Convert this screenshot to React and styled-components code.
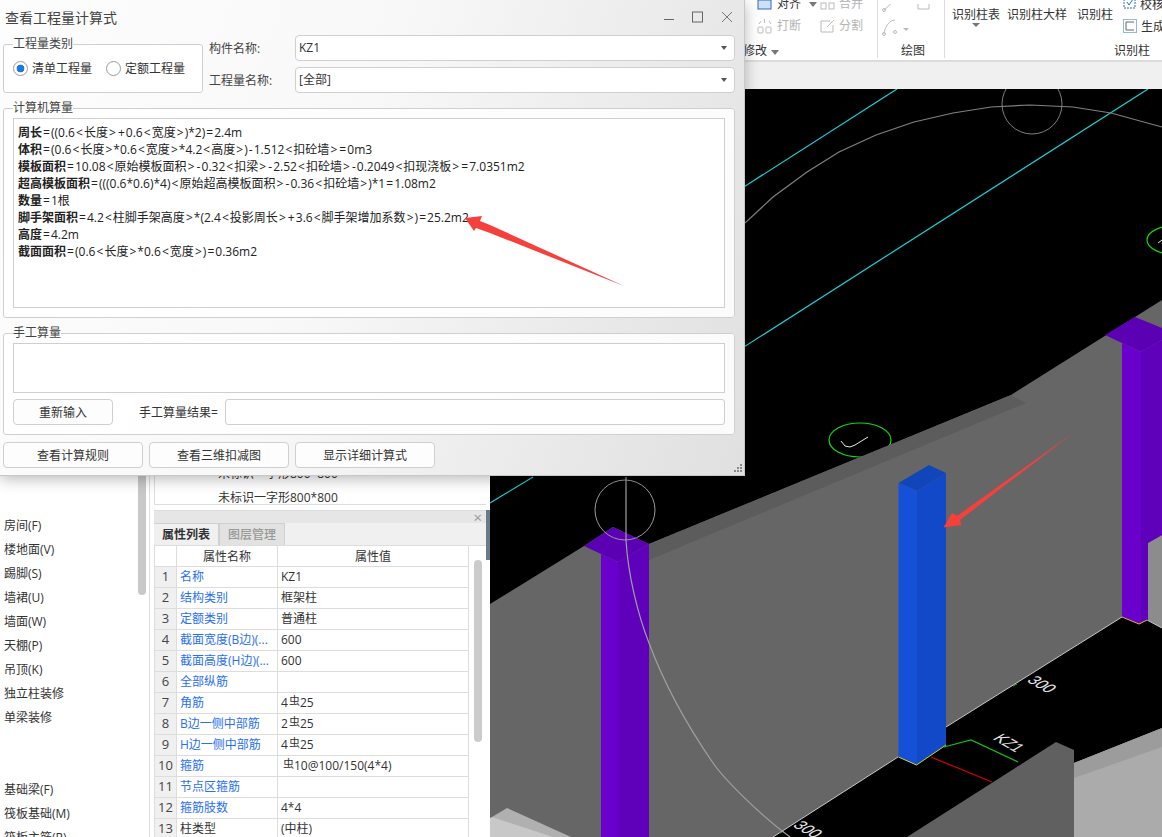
import React from 'react';
import styled, {createGlobalStyle} from 'styled-components';

const FONT = '"Open Sans", "Noto Sans CJK SC", sans-serif';

const GlobalStyle = createGlobalStyle`
    html, body {
        margin: 0;
        padding: 0;
        background: #fff;
        overflow: hidden;
    }
    body {
        font-family: ${FONT};
        font-size: 12px;
        color: #333;
    }
`;

const formulas = [
    ['周长', '=((0.6<长度>+0.6<宽度>)*2)=2.4m'],
    ['体积', '=(0.6<长度>*0.6<宽度>*4.2<高度>)-1.512<扣砼墙>=0m3'],
    ['模板面积', '=10.08<原始模板面积>-0.32<扣梁>-2.52<扣砼墙>-0.2049<扣现浇板>=7.0351m2'],
    ['超高模板面积', '=(((0.6*0.6)*4)<原始超高模板面积>-0.36<扣砼墙>)*1=1.08m2'],
    ['数量', '=1根'],
    ['脚手架面积', '=4.2<柱脚手架高度>*(2.4<投影周长>+3.6<脚手架增加系数>)=25.2m2'],
    ['高度', '=4.2m'],
    ['截面面积', '=(0.6<长度>*0.6<宽度>)=0.36m2'],
];

const navFirst = ['房间(F)', '楼地面(V)', '踢脚(S)', '墙裙(U)', '墙面(W)', '天棚(P)', '吊顶(K)', '独立柱装修', '单梁装修'];
const navSecond = ['基础梁(F)', '筏板基础(M)', '筏板主筋(R)'];

const props = [
    ['名称', 'KZ1'],
    ['结构类别', '框架柱'],
    ['定额类别', '普通柱'],
    ['截面宽度(B边)(...', '600'],
    ['截面高度(H边)(...', '600'],
    ['全部纵筋', ''],
    ['角筋', '4', '25'],
    ['B边一侧中部筋', '2', '25'],
    ['H边一侧中部筋', '4', '25'],
    ['箍筋', '', '10@100/150(4*4)'],
    ['节点区箍筋', ''],
    ['箍筋肢数', '4*4'],
    ['柱类型', '(中柱)', null, true],
];

// the symbols in the formulas run wider than the font gives them
const Formula = ({text}) => text.split(/([<>=+-])/).map((part, i) => (
    i % 2 ? <Sym key={i}>{part}</Sym> : part
))

const App = () => {
    return (
        <Page>
            <GlobalStyle />
            <LeftSide>
                <NavColumn>
                    <NavList>
                        {navFirst.map((n) => <NavItem key={n}>{n}</NavItem>)}
                        <NavGap />
                        {navSecond.map((n) => <NavItem key={n}>{n}</NavItem>)}
                    </NavList>
                    <NavThumb />
                </NavColumn>
                <PropColumn>
                    <DrawingList>
                        <DrawingRow>未标识一字形800*800</DrawingRow>
                        <DrawingRow>未标识一字形800*800</DrawingRow>
                    </DrawingList>
                    <PanelHead><PanelClose>×</PanelClose></PanelHead>
                    <Tabs>
                        <Tab $active>属性列表</Tab>
                        <Tab>图层管理</Tab>
                    </Tabs>
                    <TableWrap>
                        <PropTable>
                            <colgroup>
                                <col style={{width: 22}} />
                                <col style={{width: 101}} />
                                <col style={{width: 191}} />
                            </colgroup>
                            <thead>
                                <tr>
                                    <HeadCell />
                                    <HeadCell>属性名称</HeadCell>
                                    <HeadCell>属性值</HeadCell>
                                </tr>
                            </thead>
                            <tbody>
                                {props.map(([name, val, rest, plain], i) => (
                                    <tr key={name}>
                                        <NumCell>{i + 1}</NumCell>
                                        <NameCell $plain={plain}>{name}</NameCell>
                                        <ValueCell>
                                            {val}
                                            {rest && <><Rebar $lead={!val}>虫</Rebar>{rest}</>}
                                        </ValueCell>
                                    </tr>
                                ))}
                            </tbody>
                        </PropTable>
                        <TableScroll><TableThumb /></TableScroll>
                    </TableWrap>
                </PropColumn>
                <Splitter />
            </LeftSide>

            <RightSide>
                <Ribbon>
                    <EditGroup>
                        <ToolGrid>
                            <Tool>
                                <svg width="16" height="14" viewBox="0 0 16 14"><rect x="1" y="3" width="13" height="9" fill="#cfe0f5" stroke="#2b6cc4" /></svg>
                                <ToolText>对齐</ToolText>
                                <Caret />
                            </Tool>
                            <Tool $off>
                                <svg width="15" height="14" viewBox="0 0 15 14" fill="none" stroke="#bbb"><rect x="1" y="6" width="5" height="6" /><rect x="9" y="6" width="5" height="6" /></svg>
                                <ToolText>合并</ToolText>
                            </Tool>
                            <Tool $off>
                                <svg width="16" height="16" viewBox="0 0 16 16" fill="none" stroke="#bbb"><rect x="1" y="9" width="5" height="6" rx="1" /><rect x="9" y="9" width="5" height="6" rx="1" /><path d="M2 6l2-3M12 3l2 3M7.5 1v4" /></svg>
                                <ToolText>打断</ToolText>
                            </Tool>
                            <Tool $off>
                                <svg width="15" height="16" viewBox="0 0 15 16" fill="none" stroke="#bbb"><path d="M10 3H1v11h12V7" /><path d="M7 9l7-7" /></svg>
                                <ToolText>分割</ToolText>
                            </Tool>
                        </ToolGrid>
                        <GroupLabel $end>修改<Caret /></GroupLabel>
                    </EditGroup>
                    <DrawGroup>
                        <DrawIcons>
                            <svg width="48" height="38" viewBox="0 0 48 38" fill="none" stroke="#bbb">
                                <path d="M2 6L12 -3" />
                                <circle cx="2" cy="6" r="1.5" />
                                <path d="M36 -4v9h11V-4" />
                                <path d="M2 30C3 22 8 16 13 16" />
                                <circle cx="2" cy="30" r="1.5" />
                                <circle cx="13" cy="28" r="1.5" />
                                <path d="M21 24l3 3 3-3z" fill="#bbb" stroke="none" />
                            </svg>
                        </DrawIcons>
                        <GroupLabel $shift>绘图</GroupLabel>
                    </DrawGroup>
                    <RecogGroup>
                        <RecogTools>
                            <BigTool>识别柱表<BigCaret /></BigTool>
                            <BigTool>识别柱大样</BigTool>
                            <BigTool $wide>识别柱</BigTool>
                            <SideTools>
                                <SideTool>
                                    <svg width="13" height="10" viewBox="0 0 13 10" fill="none" stroke="#2b6cc4"><path d="M1 0v9h11V0" strokeDasharray="2 1" /><path d="M4 3l2 3 4-6" /></svg>
                                    校核
                                </SideTool>
                                <SideTool>
                                    <svg width="14" height="14" viewBox="0 0 14 14" fill="none"><rect x="0.5" y="0.5" width="13" height="13" stroke="#2b6cc4" strokeDasharray="1 1" /><path d="M11 3H3v8h8" stroke="#666" /></svg>
                                    生成
                                </SideTool>
                            </SideTools>
                        </RecogTools>
                        <GroupLabel>识别柱</GroupLabel>
                    </RecogGroup>
                </Ribbon>
                <RibbonStrip />
                <Canvas>
                    <Scene />
                </Canvas>
            </RightSide>

            <Dialog>
                <TitleBar>
                    <Title>查看工程量计算式</Title>
                    <WinButtons>
                        <svg width="10" height="12" viewBox="0 0 10 12"><path d="M0 8.5h10" stroke="#666" /></svg>
                        <svg width="11" height="12" viewBox="0 0 11 12" fill="none"><rect x="0.5" y="1" width="10" height="10" stroke="#666" /></svg>
                        <svg width="12" height="12" viewBox="0 0 12 12"><path d="M1 1l10 10M11 1L1 11" stroke="#777" /></svg>
                    </WinButtons>
                </TitleBar>
                <DialogBody>
                    <TopRow>
                        <TypeGroup>
                            <legend>工程量类别</legend>
                            <RadioRow>
                                <RadioLabel><Radio $on />清单工程量</RadioLabel>
                                <RadioLabel><Radio />定额工程量</RadioLabel>
                            </RadioRow>
                        </TypeGroup>
                        <Fields>
                            <FieldRow>
                                <FieldLabel>构件名称:</FieldLabel>
                                <SelectBox>KZ1<SelectCaret /></SelectBox>
                            </FieldRow>
                            <FieldRow>
                                <FieldLabel>工程量名称:</FieldLabel>
                                <SelectBox>[全部]<SelectCaret /></SelectBox>
                            </FieldRow>
                        </Fields>
                    </TopRow>
                    <Group>
                        <legend>计算机算量</legend>
                        <FormulaBox>
                            {formulas.map(([k, v]) => (
                                <FormulaLine key={k}><b>{k}</b><Formula text={v} /></FormulaLine>
                            ))}
                        </FormulaBox>
                    </Group>
                    <Group>
                        <legend>手工算量</legend>
                        <ManualBox />
                        <ManualRow>
                            <Button $w={100}>重新输入</Button>
                            <ResultLabel>手工算量结果=</ResultLabel>
                            <ResultInput />
                        </ManualRow>
                    </Group>
                    <ButtonRow>
                        <Button $w={140}>查看计算规则</Button>
                        <Button $w={140}>查看三维扣减图</Button>
                        <Button $w={140}>显示详细计算式</Button>
                    </ButtonRow>
                </DialogBody>
                <Grip width="10" height="10" viewBox="0 0 10 10" fill="#8a8a8a">
                    <rect x="7" y="0" width="2" height="2" />
                    <rect x="4" y="3" width="2" height="2" />
                    <rect x="7" y="3" width="2" height="2" />
                    <rect x="1" y="6" width="2" height="2" />
                    <rect x="4" y="6" width="2" height="2" />
                    <rect x="7" y="6" width="2" height="2" />
                </Grip>
                <DialogArrow width="745" height="476" viewBox="0 0 745 476">
                    <polygon points="465,218 482,216 480,221 490,225 624,286 490,233 476,228 474,231" fill="#f5403c" />
                </DialogArrow>
            </Dialog>
        </Page>
    )
}

// 3D view of the model, numbers are page pixels
const Scene = () => (
    <SceneSvg viewBox="490 89 672 748">
        <g stroke="#19d3d6" strokeWidth="1.2">
            <line x1="700" y1="215" x2="897" y2="89" />
            <line x1="700" y1="375" x2="1148" y2="89" />
            <line x1="490" y1="503" x2="533" y2="477" />
        </g>
        <ellipse cx="860" cy="440" rx="31" ry="17" fill="none" stroke="#12d812" strokeWidth="1.2" />
        <path d="M841 441l4 5 5 1 5-2 13-8" fill="none" stroke="#e8e8e8" />
        <ellipse cx="1178" cy="240" rx="31" ry="15" fill="none" stroke="#12d812" strokeWidth="1.2" />
        <path d="M1158 243l4-3" fill="none" stroke="#e8e8e8" />
        <circle cx="1032" cy="104" r="30" fill="none" stroke="#808080" />
        <polyline points="745,223 773,197 807,172 839,152 876,135 914,122 953,113 991,107 1030,105 1073,107 1111,113 1162,127" fill="none" stroke="#808080" strokeWidth="1.2" />

        <polygon points="490,604 584,546 613,527 649,544 1011,395 1162,300 1162,628 1147,620 1139,624 1122,617 946,727 946,745 916,765 898,757 773,837 490,837" fill="#666" />
        <polygon points="649,544 1011,395 1026,403 649,560" fill="#5c5c5c" />
        <polygon points="1148,543 1162,535 1162,628 1148,620" fill="#8c8c8c" />

        <polyline points="773,837 898,757" fill="none" stroke="#c8c8c8" />
        <polyline points="946,727 1122,617" fill="none" stroke="#c8c8c8" />
        <polyline points="1147,620 1162,628" fill="none" stroke="#c8c8c8" />

        <polygon points="584,546 613,527 649,544 618,562 601,554" fill="#5c00b4" />
        <polygon points="601,554 618,562 618,837 601,837" fill="#6a00cc" />
        <polygon points="618,562 649,544 649,837 618,837" fill="#5f00bb" />

        <polygon points="1105,335 1135,317 1162,328 1162,340 1141,352 1122,343" fill="#5c00b4" />
        <polygon points="1122,343 1141,352 1141,624 1139,624 1122,617" fill="#6a00cc" />
        <polygon points="1141,352 1162,340 1162,535 1148,543 1148,620 1139,624 1141,624" fill="#5f00bb" />
        <polyline points="1122,617 1139,624 1147,620" fill="none" stroke="#d8b820" />

        <polygon points="898.5,483 929,465 946,473 917,491" fill="#1146ba" />
        <polygon points="898.5,483 917,491 917,765 898.5,757" fill="#1450d8" />
        <polygon points="917,491 946,473 946,745 917,765" fill="#1249c8" />
        <polyline points="898.5,757 916.5,765 946,745" fill="none" stroke="#d8c820" />

        <polyline points="944,747 971,740 1018,762" fill="none" stroke="#12c012" strokeWidth="1.2" />
        <line x1="931" y1="757" x2="992" y2="782" stroke="#d80000" strokeWidth="1.2" />
        <line x1="1013" y1="686" x2="1017" y2="684" stroke="#12c012" />
        <line x1="780" y1="833" x2="784" y2="831" stroke="#12c012" />
        <SceneText transform="translate(992 739) rotate(30) skewX(-30)">KZ1</SceneText>
        <SceneText transform="translate(1026 681) rotate(30) skewX(-30)">300</SceneText>
        <SceneText transform="translate(792 826) rotate(30) skewX(-30)">300</SceneText>

        <polygon points="907,837 1056,742 1074,750 1074,837" fill="#606060" />
        <polygon points="1074,763 1162,728 1162,837 1074,837" fill="#ababab" />
        <polygon points="1074,763 1162,728 1162,747 1074,778" fill="#9c9c9c" />
        <polygon points="492,817 507,808 571,837 490,837" fill="#b0b0b0" />
        <polygon points="490,818 492,817 553,837 490,837" fill="#c8c8c8" />

        <circle cx="625" cy="510" r="30" fill="none" stroke="#9a9a9a" />
        <path d="M626 477V540C628 575 638 615 649 643C662 678 680 715 713 763C725 780 760 815 790 837" fill="none" stroke="#a0a0a0" strokeWidth="1.2" />
        <polygon points="1073,433 960,520 961.5,525 943.5,527.6 952,513 957,516" fill="#f5403c" />
    </SceneSvg>
)

const Page = styled.div`
    position: relative;
    display: grid;
    grid-template-columns: 490px 672px;
    width: 1162px;
    height: 837px;
    overflow: hidden;
`;

const LeftSide = styled.div`
    display: flex;
    height: 837px;
    background: #fff;
    overflow: hidden;
`;

const NavColumn = styled.div`
    display: flex;
    align-items: flex-start;
    width: 149px;
    border-right: 1px solid #ddd;
    margin-right: 4px;
    flex: none;
`;

const NavList = styled.div`
    flex: 1;
    padding-top: 514px;
    padding-left: 4px;
`;

const NavItem = styled.div`
    height: 24px;
    line-height: 24px;
    color: #333;
    white-space: nowrap;
`;

const NavGap = styled.div`
    height: 48px;
`;

const NavThumb = styled.div`
    width: 8px;
    height: 595px;
    margin-right: 3px;
    background: #c8c8c8;
    border-radius: 0 0 4px 4px;
`;

const PropColumn = styled.div`
    width: 332px;
    flex: none;
`;

const DrawingList = styled.div`
    display: flex;
    flex-direction: column;
    justify-content: flex-end;
    gap: 10px;
    height: 505px;
    border-bottom: 1px solid #ddd;
    border-left: 1px solid #ddd;
    box-sizing: border-box;
`;

const DrawingRow = styled.div`
    height: 16px;
    line-height: 16px;
    margin-bottom: -2px;
    padding-left: 63px;
`;

const PanelHead = styled.div`
    display: flex;
    justify-content: flex-end;
    align-items: center;
    height: 12px;
    margin-top: 5px;
    background: #e6e6e6;
    border-top: 1px solid #dcdcdc;
`;

const PanelClose = styled.span`
    margin-right: 4px;
    font-size: 15px;
    line-height: 12px;
    color: #999;
`;

const Tabs = styled.div`
    display: flex;
    height: 22px;
    background: #f0f0f0;
`;

const Tab = styled.div`
    padding: 0 8px;
    line-height: 22px;
    border: 1px solid #d0d0d0;
    border-left: ${(p) => p.$active ? '0' : '1px solid #d0d0d0'};
    border-top-color: #d0d0d0;
    border-bottom: 0;
    background: ${(p) => p.$active ? '#f0f0f0' : '#e2e2e2'};
    color: ${(p) => p.$active ? '#333' : '#999'};
    font-weight: ${(p) => p.$active ? 600 : 500};
`;

const TableWrap = styled.div`
    display: flex;
    align-items: flex-start;
    border-top: 1px solid #ddd;
`;

const PropTable = styled.table`
    width: 314px;
    table-layout: fixed;
    border-collapse: collapse;
    flex: none;
`;

const HeadCell = styled.th`
    height: 20px;
    padding: 0;
    font-weight: 400;
    text-align: center;
    border: 1px solid #ddd;
    border-top: 0;
    color: #333;
`;

const NumCell = styled.td`
    height: 20px;
    padding: 0;
    line-height: 19px;
    vertical-align: top;
    text-align: center;
    font-size: 13px;
    color: #444;
    background: #f0f0f0;
    border: 1px solid #ddd;
`;

const NameCell = styled.td`
    height: 20px;
    padding: 0 0 0 3px;
    line-height: 19px;
    vertical-align: top;
    white-space: nowrap;
    overflow: hidden;
    color: ${(p) => p.$plain ? '#333' : '#2a6ff0'};
    border: 1px solid #ddd;
`;

const ValueCell = styled.td`
    height: 20px;
    padding: 0 0 0 3px;
    line-height: 19px;
    vertical-align: top;
    white-space: nowrap;
    color: #333;
    border: 1px solid #ddd;
`;

const Rebar = styled.span`
    position: relative;
    top: -2px;
    margin: ${(p) => p.$lead ? '0 0 0 2px' : '0 0 0 1px'};
    font-size: 11px;
`;

const TableScroll = styled.div`
    flex: 1;
    padding: 14px 4px 0 5px;
`;

const TableThumb = styled.div`
    height: 182px;
    width: 8px;
    background: #cbcbcb;
    border-radius: 4px;
`;

const Splitter = styled.div`
    width: 4px;
    height: 50px;
    margin-top: 510px;
    background: #6b7a88;
    flex: none;
`;

const RightSide = styled.div`
    display: flex;
    flex-direction: column;
    height: 837px;
`;

const Ribbon = styled.div`
    display: flex;
    height: 62px;
    box-sizing: border-box;
    background: #fff;
    border-bottom: 2px solid #dcdcdc;
    overflow: hidden;
`;

const RibbonStrip = styled.div`
    height: 27px;
    background: #f0f0f0;
`;

const Group = styled.fieldset`
    margin: 0;
    padding: 0 9px 9px;
    min-width: 0;
    border: 1px solid #cfcfcf;
    border-radius: 3px;
    background: rgba(255, 255, 255, 0.85);

    legend {
        padding: 0;
        line-height: 16px;
        color: #444;
    }
`;

const RibbonGroupBase = styled.div`
    display: flex;
    flex-direction: column;
    height: 58px;
    box-sizing: border-box;
    flex: none;
`;

const EditGroup = styled(RibbonGroupBase)`
    width: 388px;
    align-items: flex-end;
    border-right: 1px solid #ddd;
`;

const DrawGroup = styled(RibbonGroupBase)`
    width: 67px;
    border-right: 1px solid #ddd;
    align-items: center;
`;

const RecogGroup = styled(RibbonGroupBase)`
    flex: 1;
    min-width: 0;
    align-items: flex-end;
    padding-right: 12px;
`;

const ToolGrid = styled.div`
    display: grid;
    grid-template-columns: 63px 57px;
    grid-template-rows: 22px 22px;
    margin-top: -7px;
`;

const Tool = styled.div`
    display: flex;
    align-items: center;
    gap: 4px;
    color: ${(p) => p.$off ? '#b4b4b4' : '#333'};
    white-space: nowrap;
`;

const ToolText = styled.span`
    line-height: 22px;
`;

const Caret = styled.i`
    display: inline-block;
    margin-left: 4px;
    border-left: 4px solid transparent;
    border-right: 4px solid transparent;
    border-top: 5px solid #777;
`;

const GroupLabel = styled.div`
    margin-top: auto;
    height: 16px;
    line-height: 16px;
    margin-bottom: -1px;
    color: #333;
    white-space: nowrap;
    padding-right: ${(p) => p.$end ? '98px' : '0'};
    padding-left: ${(p) => p.$shift ? '4px' : '0'};
`;

const DrawIcons = styled.div`
    align-self: flex-start;
    padding: 4px 0 0 4px;
    height: 36px;
`;

const RecogTools = styled.div`
    display: flex;
    align-self: flex-start;
    padding-left: 7px;
    gap: 7px;
    height: 36px;
`;

const BigTool = styled.div`
    position: relative;
    padding-top: 6px;
    margin-left: ${(p) => p.$wide ? '3px' : '0'};
    line-height: 18px;
    white-space: nowrap;
`;

const BigCaret = styled.i`
    position: absolute;
    left: 20px;
    top: 23px;
    border-left: 4px solid transparent;
    border-right: 4px solid transparent;
    border-top: 4px solid #777;
`;

const SideTools = styled.div`
    display: grid;
    grid-template-rows: 22px 22px;
    margin-top: -7px;
    margin-left: 3px;
`;

const SideTool = styled.div`
    display: flex;
    align-items: center;
    gap: 4px;
    white-space: nowrap;
`;

const Canvas = styled.div`
    flex: 1;
    background: #000;
    overflow: hidden;
`;

const SceneSvg = styled.svg`
    display: block;
    width: 672px;
    height: 748px;
`;

const SceneText = styled.text`
    font-family: "Liberation Sans", sans-serif;
    font-size: 15px;
    font-weight: 300;
    fill: #e4e4e4;
`;

const Dialog = styled.div`
    position: absolute;
    left: 0;
    top: 0;
    width: 745px;
    height: 476px;
    background: linear-gradient(110deg, #fdfdfd 0%, #f8f8f8 45%, #e6e6e6 85%, #e0e0e0 100%);
    box-shadow: 0 3px 14px rgba(0, 0, 0, 0.28);
    border-right: 1px solid #c8c8c8;
    border-bottom: 1px solid #c8c8c8;
    box-sizing: border-box;
`;

const TitleBar = styled.div`
    display: flex;
    justify-content: space-between;
    align-items: center;
    height: 35px;
    box-sizing: border-box;
    padding: 0 11px 1px 5px;
`;

const Title = styled.div`
    font-size: 14px;
    color: #444;
`;

const WinButtons = styled.div`
    display: flex;
    align-items: center;
    gap: 18px;
`;

const DialogBody = styled.div`
    display: flex;
    flex-direction: column;
    gap: 7px;
    padding: 0 9px 0 3px;
`;

const TopRow = styled.div`
    display: flex;
    height: 58px;
`;

const TypeGroup = styled(Group)`
    width: 200px;
    height: 57px;
    margin-top: 1px;
    box-sizing: border-box;
    flex: none;
`;

const RadioRow = styled.div`
    display: flex;
    gap: 14px;
    margin-top: 6px;
`;

const RadioLabel = styled.label`
    display: flex;
    align-items: center;
    gap: 4px;
    height: 20px;
    color: #333;
    white-space: nowrap;
`;

const Radio = styled.i`
    display: block;
    width: 13px;
    height: 13px;
    border-radius: 50%;
    border: 1px solid #9a9a9a;
    background: ${(p) => p.$on ? 'radial-gradient(circle, #1e78e0 0 3.6px, #fff 4.2px)' : '#fff'};
`;

const Fields = styled.div`
    display: flex;
    flex-direction: column;
    gap: 6px;
    margin-left: 6px;
    flex: 1;
`;

const FieldRow = styled.div`
    display: flex;
    align-items: center;
`;

const FieldLabel = styled.div`
    width: 86px;
    color: #444;
    flex: none;
`;

const SelectBox = styled.div`
    position: relative;
    flex: 1;
    height: 26px;
    line-height: 24px;
    box-sizing: border-box;
    padding-left: 3px;
    background: #fff;
    border: 1px solid #cfcfcf;
    border-radius: 4px;
    color: #333;
`;

const SelectCaret = styled.i`
    position: absolute;
    right: 7px;
    top: 10px;
    border-left: 3px solid transparent;
    border-right: 3px solid transparent;
    border-top: 4px solid #555;
`;

const FormulaBox = styled.div`
    height: 190px;
    margin-top: 2px;
    box-sizing: border-box;
    padding: 5px 0 0 4px;
    background: #fff;
    border: 1px solid #cfcfcf;
`;

const FormulaLine = styled.div`
    height: 17px;
    line-height: 17px;
    color: #222;
    white-space: nowrap;

    b {
        font-weight: 700;
    }
`;

const Sym = styled.span`
    padding: 0 1.05px;
`;

const ManualBox = styled.div`
    height: 50px;
    margin-top: 2px;
    box-sizing: border-box;
    background: #fff;
    border: 1px solid #cfcfcf;
`;

const ManualRow = styled.div`
    display: flex;
    align-items: center;
    margin-top: 6px;
`;

const Button = styled.div`
    width: ${(p) => p.$w}px;
    height: 26px;
    line-height: 25px;
    box-sizing: border-box;
    text-align: center;
    background: #fdfdfd;
    border: 1px solid #cfcfcf;
    border-radius: 4px;
    color: #333;
`;

const ResultLabel = styled.div`
    margin: 0 6px 0 26px;
    padding-right: 1px;
    color: #333;
`;

const ResultInput = styled.div`
    flex: 1;
    height: 26px;
    box-sizing: border-box;
    background: #fff;
    border: 1px solid #cfcfcf;
    border-radius: 3px;
`;

const ButtonRow = styled.div`
    display: flex;
    gap: 6px;
`;

const Grip = styled.svg`
    position: absolute;
    right: 1px;
    bottom: 1px;
`;

const DialogArrow = styled.svg`
    position: absolute;
    left: 0;
    top: 0;
    pointer-events: none;
`;

export default App;
